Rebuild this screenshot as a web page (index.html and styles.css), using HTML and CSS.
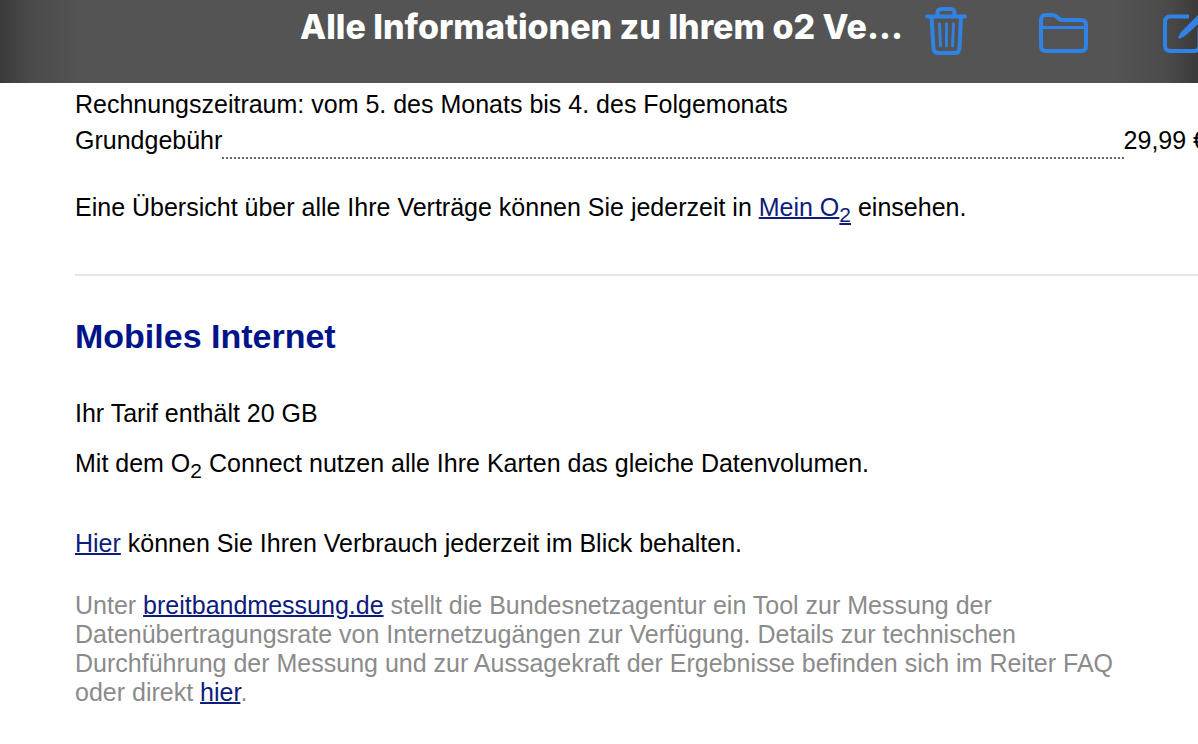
FILE: index.html
```html
<!DOCTYPE html>
<html lang="de">
<head>
<meta charset="utf-8">
<meta name="viewport" content="width=device-width, initial-scale=1">
<title>Alle Informationen zu Ihrem o2 Vertrag</title>
<link rel="stylesheet" href="styles.css">
</head>
<body>
<header class="toolbar">
  <h1 class="toolbar-title">Alle Informationen zu Ihrem o2 Ve...</h1>
  <div class="toolbar-actions">
    <button class="icon-button" type="button" aria-label="Löschen">
      <svg width="44" height="52" viewBox="0 0 44 52" fill="none" stroke="currentColor" stroke-linecap="round" stroke-linejoin="round">
        <path stroke-width="4" d="M3 12.500H41M13.500 12V9Q13.500 5 17.500 5H26.500Q30.500 5 30.500 9V12M7.500 13L9.500 44.500Q10 49 14.500 49H30.500Q35 49 35.500 44.500L37 13"/>
        <path stroke-width="2.800" d="M15.500 20L16.500 42M22.500 20V42M29.500 20L28.500 42"/>
      </svg>
    </button>
    <button class="icon-button" type="button" aria-label="In Ordner bewegen">
      <svg width="52" height="52" viewBox="0 0 52 52" fill="none" stroke="currentColor" stroke-linecap="round" stroke-linejoin="round">
        <path stroke-width="4" d="M2 16Q2 11 7 11H13Q16 11 18 13L19 14Q21 16 24 16H42Q47 16 47 21V42Q47 47 42 47H7Q2 47 2 42Z"/>
        <path stroke-width="3" d="M3 23.500H46"/>
      </svg>
    </button>
    <button class="icon-button" type="button" aria-label="Neue E-Mail">
      <svg width="54" height="52" viewBox="0 0 54 52" fill="none" stroke="currentColor" stroke-linejoin="round">
        <path stroke-width="4" d="M27 12.500H8.500Q3 12.500 3 18V41.500Q3 47 8.500 47H32Q37.500 47 37.500 41.500V24"/>
        <path fill="currentColor" stroke="none" d="M38 9L19 28Q17 31 16 34Q17 35 19 34Q22 33 24 31L44 13Z"/>
      </svg>
    </button>
  </div>
</header>
<main class="mail">
  <section class="contract">
    <p class="line">Rechnungszeitraum: vom 5. des Monats bis 4. des Folgemonats</p>
    <div class="fee">
      <span>Grundgebühr</span>
      <span class="fee-leader"></span>
      <span class="fee-price">29,99 €</span>
    </div>
    <p class="overview">Eine Übersicht über alle Ihre Verträge können Sie jederzeit in <a href="#mein-o2">Mein O<sub>2</sub></a> einsehen.</p>
  </section>
  <section class="internet">
    <h2 class="heading">Mobiles Internet</h2>
    <p class="line">Ihr Tarif enthält 20 GB</p>
    <p class="connect">Mit dem O<sub>2</sub> Connect nutzen alle Ihre Karten das gleiche Datenvolumen.</p>
    <p class="usage"><a href="#verbrauch">Hier</a> können Sie Ihren Verbrauch jederzeit im Blick behalten.</p>
    <p class="note">Unter <a href="#breitbandmessung">breitbandmessung.de</a> stellt die Bundesnetzagentur ein Tool zur Messung der Datenübertragungsrate von Internetzugängen zur Verfügung. Details zur technischen Durchführung der Messung und zur Aussagekraft der Ergebnisse befinden sich im Reiter FAQ oder direkt <a href="#faq">hier</a>.</p>
  </section>
</main>
</body>
</html>
```
FILE: styles.css
```css
* {
  box-sizing: border-box;
}

body {
  margin: 0;
  background: #fff;
  color: #000;
  font-family: "Liberation Sans", Arial, sans-serif;
  font-size: 25px;
  line-height: 30px;
  overflow-x: hidden;
}

h1, h2, p {
  margin: 0;
}

.toolbar {
  display: flex;
  align-items: flex-start;
  height: 83px;
  padding-left: 300px;
  overflow: hidden;
  background: linear-gradient(90deg, #3a3a3a 0, #4b4b4b 32px, #545454 84px, #545454 calc(100% - 84px), #4b4b4b calc(100% - 32px), #3a3a3a 100%);
}

.toolbar-title {
  flex: 1 0 0;
  padding-top: 7px;
  color: #fff;
  font: 800 34px/40px Inter, sans-serif;
  white-space: nowrap;
}

.toolbar-actions {
  display: flex;
  gap: 71px;
  margin-right: -18px;
  padding-top: 4px;
}

.icon-button {
  display: block;
  padding: 0;
  border: 0;
  background: none;
  color: #3083e4;
}

.icon-button svg {
  display: block;
}

.mail {
  padding: 6px 0 36px 75px;
}

.contract {
  padding-bottom: 52px;
  border-bottom: 2px solid #e4e4e4;
}

.fee {
  display: flex;
  margin: 6px -9px 0 0;
}

.fee-leader {
  flex: 1;
  height: 34px;
  border-bottom: 2px dotted #666;
}

.fee-price {
  white-space: nowrap;
}

.overview {
  margin-top: 33px;
}

.heading {
  padding: 40px 0 42px;
  color: #001489;
  font-size: 34px;
  line-height: 40px;
}

.connect {
  margin-top: 20px;
}

.usage {
  margin-top: 50px;
}

.note {
  max-width: 1060px;
  margin-top: 33px;
  color: #8b8b8b;
  line-height: 29px;
}

a {
  color: #0c1c7c;
  text-decoration: underline;
  text-decoration-thickness: 2px;
}

sub {
  font-size: 21px;
  line-height: 0;
}

a sub {
  display: inline-block;
  text-decoration: underline;
  text-decoration-thickness: 2px;
}
```
